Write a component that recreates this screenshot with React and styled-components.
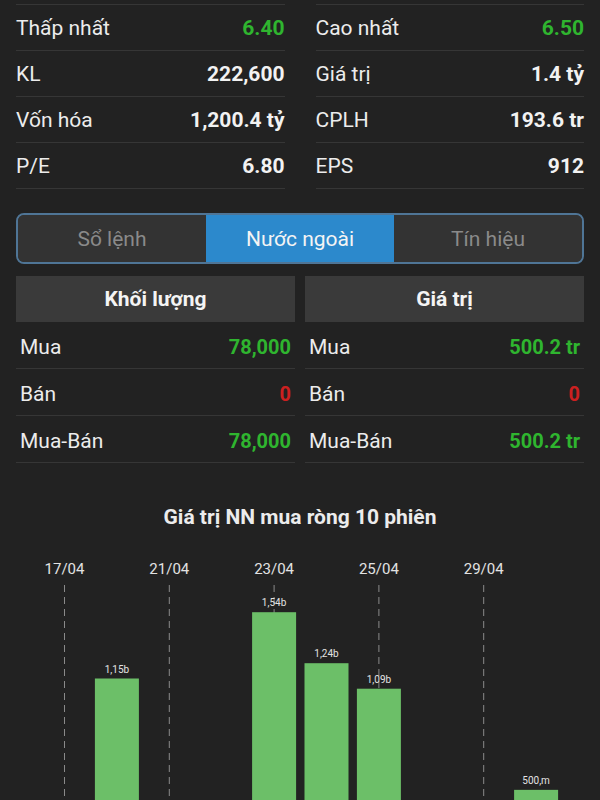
import styled, { createGlobalStyle } from "styled-components";

const GlobalStyle = createGlobalStyle`
  body {
    margin: 0;
    background: #222222;
    font-family: Roboto, "Noto Sans", "Liberation Sans", sans-serif;
    color: #ececec;
  }
`;

const Page = styled.div`
  padding: 4px 16px 0;
`;

const StatsGrid = styled.div`
  display: grid;
  grid-template-columns: 1fr 1fr;
  column-gap: 31px;
`;

const StatsColumn = styled.div`
  border-top: 1px solid #363636;
`;

const StatRow = styled.div`
  display: flex;
  align-items: center;
  justify-content: space-between;
  height: 45px;
  border-bottom: 1px solid #363636;
  font-size: 21px;
`;

const Label = styled.span`
  color: #ececec;
`;

const Value = styled.span`
  font-weight: 700;
  color: ${(p) => (p.$tone === "up" ? "#2fb52f" : p.$tone === "down" ? "#cc2020" : "#f2f2f2")};
`;

const Tabs = styled.div`
  display: grid;
  grid-template-columns: repeat(3, 1fr);
  margin-top: 24px;
  height: 47px;
  border: 2px solid #4f7596;
  border-radius: 8px;
  overflow: hidden;
  background: #333333;
`;

const Tab = styled.div`
  display: flex;
  align-items: center;
  justify-content: center;
  font-size: 21px;
  background: ${(p) => (p.$active ? "#2c89cc" : "#333333")};
  color: ${(p) => (p.$active ? "#f4f4f4" : "#8a8a8a")};
`;

const Tables = styled.div`
  display: grid;
  grid-template-columns: 1fr 1fr;
  column-gap: 10px;
  margin-top: 12px;
`;

const HeadCell = styled.div`
  display: flex;
  align-items: center;
  justify-content: center;
  height: 46px;
  background: #3a3a3a;
  font-size: 21px;
  font-weight: 700;
  color: #f4f4f4;
`;

const DataRow = styled(StatRow)`
  box-sizing: border-box;
  height: 47px;
  padding: 3px 4px 0;
  font-size: 21px;

  ${Value} {
    font-size: 20px;
  }
`;

const ChartTitle = styled.div`
  margin-top: 41px;
  text-align: center;
  font-size: 21px;
  line-height: 26px;
  font-weight: 700;
  color: #ececec;
`;

const ChartSvg = styled.svg`
  display: block;
  margin-top: 15px;
`;

const stats = [
  [
    ["Thấp nhất", "6.40", "up"],
    ["KL", "222,600"],
    ["Vốn hóa", "1,200.4 tỷ"],
    ["P/E", "6.80"],
  ],
  [
    ["Cao nhất", "6.50", "up"],
    ["Giá trị", "1.4 tỷ"],
    ["CPLH", "193.6 tr"],
    ["EPS", "912"],
  ],
];

const foreign = [
  {
    title: "Khối lượng",
    rows: [
      ["Mua", "78,000", "up"],
      ["Bán", "0", "down"],
      ["Mua-Bán", "78,000", "up"],
    ],
  },
  {
    title: "Giá trị",
    rows: [
      ["Mua", "500.2 tr", "up"],
      ["Bán", "0", "down"],
      ["Mua-Bán", "500.2 tr", "up"],
    ],
  },
];

// 10 sessions, value in billions
const sessions = [
  { date: "17/04", v: 0 },
  { v: 1.15, label: "1,15b" },
  { date: "21/04", v: 0 },
  { v: 0 },
  { date: "23/04", v: 1.54, label: "1,54b" },
  { v: 1.24, label: "1,24b" },
  { date: "25/04", v: 1.09, label: "1,09b" },
  { v: 0 },
  { date: "29/04", v: 0 },
  { v: 0.495, label: "500,m" },
];

function NetChart() {
  const slot = 52.4;
  const first = 64.5;
  const base = 329;
  const scale = 170;
  const barW = 44;
  return (
    <ChartSvg width="600" height="340" viewBox="0 0 600 340">
      {sessions.map((s, i) =>
        s.date ? (
          <g key={"d" + i}>
            <text
              x={first + i * slot}
              y={29}
              textAnchor="middle"
              fontSize="15"
              fill="#e2e2e2"
              fontFamily="Roboto, sans-serif"
            >
              {s.date}
            </text>
            <line
              x1={first + i * slot}
              x2={first + i * slot}
              y1={40}
              y2={340}
              stroke="#8a8a8a"
              strokeWidth="1"
              strokeDasharray="7 5"
            />
          </g>
        ) : null
      )}
      {sessions.map((s, i) => {
        if (!s.v) return null;
        const cx = first + i * slot;
        const top = base - s.v * scale;
        return (
          <g key={"b" + i}>
            <rect x={cx - barW / 2} y={top} width={barW} height={base - top} fill="#6cbf68" />
            <text
              x={cx}
              y={top - 6}
              textAnchor="middle"
              fontSize="10"
              fill="#e2e2e2"
              fontFamily="Roboto, sans-serif"
            >
              {s.label}
            </text>
          </g>
        );
      })}
    </ChartSvg>
  );
}

export default function App() {
  return (
    <>
      <GlobalStyle />
      <Page>
        <StatsGrid>
          {stats.map((col, ci) => (
            <StatsColumn key={ci}>
              {col.map(([label, value, tone]) => (
                <StatRow key={label}>
                  <Label>{label}</Label>
                  <Value $tone={tone}>{value}</Value>
                </StatRow>
              ))}
            </StatsColumn>
          ))}
        </StatsGrid>

        <Tabs>
          <Tab>Sổ lệnh</Tab>
          <Tab $active>Nước ngoài</Tab>
          <Tab>Tín hiệu</Tab>
        </Tabs>

        <Tables>
          {foreign.map((t) => (
            <div key={t.title}>
              <HeadCell>{t.title}</HeadCell>
              {t.rows.map(([label, value, tone]) => (
                <DataRow key={label}>
                  <Label>{label}</Label>
                  <Value $tone={tone}>{value}</Value>
                </DataRow>
              ))}
            </div>
          ))}
        </Tables>
      </Page>

      <ChartTitle>Giá trị NN mua ròng 10 phiên</ChartTitle>
      <NetChart />
    </>
  );
}
